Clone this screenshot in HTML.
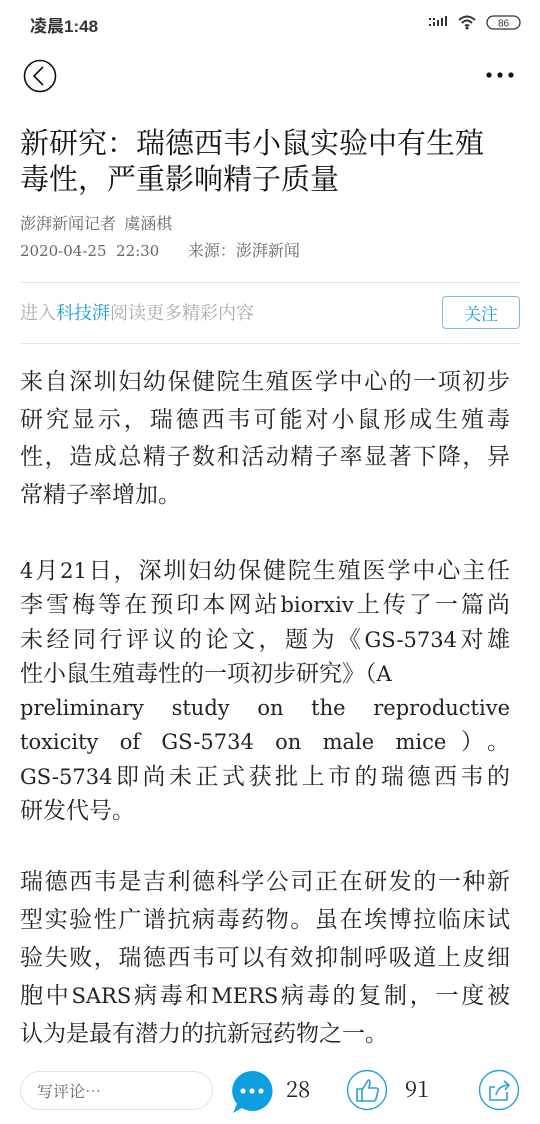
<!DOCTYPE html>
<html><head><meta charset="utf-8"><style>
*{margin:0;padding:0;box-sizing:border-box}
body{width:540px;height:1124px;background:#fff;position:relative;overflow:hidden;font-family:"Noto Serif CJK SC","Liberation Serif",serif;color:#222}
.abs{position:absolute}
.status{left:30px;top:12px;font:bold 17px "Liberation Sans","Noto Sans CJK SC",sans-serif;color:#333}
.title{left:20px;top:124px;font-size:29px;line-height:36px;color:#111;white-space:nowrap}
.meta{left:20px;font-size:16px;color:#666;white-space:nowrap;line-height:20px}
.hr{left:20px;width:500px;height:1px;background:#e8e8e8}
.body{left:20px;width:490px;font-size:23px;color:#222;font-family:"DejaVu Serif","Noto Serif CJK SC",serif}
.body div{text-align:justify;text-align-last:justify;white-space:nowrap;overflow:visible}
.body div.l{text-align-last:left}
.e{font-size:21px}
.p1 div{height:37.5px;line-height:37.5px}
.p2 div{height:34.3px;line-height:34.3px}
.p3 div{height:38px;line-height:38px}
.d{font-family:"DejaVu Serif",serif;font-size:15px}
</style></head><body>
<div class="abs status">凌晨1:48</div>
<svg class="abs" style="left:428px;top:14px" width="94" height="18" viewBox="0 0 94 18">
<g fill="#333"><rect x="1" y="10" width="2" height="2"/><rect x="5" y="8" width="2" height="4"/><rect x="9" y="6" width="2" height="6"/><rect x="13" y="4" width="2" height="8"/><rect x="17" y="2" width="2" height="10"/><rect x="1" y="4" width="2" height="2"/><rect x="5" y="4" width="2" height="2"/></g>
<path d="M31 6 Q39 -1 47 6 M34 9 Q39 4 44 9 M37 12 Q39 10 41 12" stroke="#333" stroke-width="2" fill="none"/><circle cx="39" cy="14" r="1.5" fill="#333"/>
<rect x="59" y="2" width="33" height="13" rx="6.5" fill="none" stroke="#333" stroke-width="1.3"/>
<text x="75.5" y="12.5" font-size="10" text-anchor="middle" font-family="Liberation Sans" fill="#333">86</text></svg>
<svg class="abs" style="left:23px;top:59px" width="34" height="34"><circle cx="17" cy="17" r="15.5" fill="none" stroke="#111" stroke-width="1.6"/><path d="M20 8 L11 17 L20 26" fill="none" stroke="#111" stroke-width="1.6"/></svg>
<svg class="abs" style="left:484px;top:69px" width="34" height="12"><circle cx="5" cy="6" r="2.6" fill="#111"/><circle cx="16" cy="6" r="2.6" fill="#111"/><circle cx="27" cy="6" r="2.6" fill="#111"/></svg>
<div class="abs title">新研究：瑞德西韦小鼠实验中有生殖<br>毒性，严重影响精子质量</div>
<div class="abs meta" style="top:213px">澎湃新闻记者&nbsp;&nbsp;虞涵棋</div>
<div class="abs meta" style="top:240px"><span class="d">2020-04-25&nbsp;&nbsp;22:30</span>&nbsp;&nbsp;&nbsp;&nbsp;&nbsp;&nbsp;&nbsp;来源：澎湃新闻</div>
<div class="abs hr" style="top:282px"></div>
<div class="abs" style="left:20px;top:300px;font-size:18px;line-height:24px;color:#aaa;white-space:nowrap">进入<span style="color:#1a9bd7">科技湃</span>阅读更多精彩内容</div>
<div class="abs" style="left:442px;top:296px;width:78px;height:33px;border:1px solid #7bbfdc;border-radius:4px;color:#1a9bd7;font-size:17px;text-align:center;line-height:31px">关注</div>
<div class="abs hr" style="top:343px"></div>
<div class="abs body p1" style="top:364px">
<div>来自深圳妇幼保健院生殖医学中心的一项初步</div>
<div>研究显示，瑞德西韦可能对小鼠形成生殖毒</div>
<div>性，造成总精子数和活动精子率显著下降，异</div>
<div class="l">常精子率增加。</div>
</div>
<div class="abs body p2" style="top:554px">
<div><span class="e">4</span>月<span class="e">21</span>日，深圳妇幼保健院生殖医学中心主任</div>
<div>李雪梅等在预印本网站<span class="e">biorxiv</span>上传了一篇尚</div>
<div>未经同行评议的论文，题为《<span class="e">GS-5734</span>对雄</div>
<div class="l">性小鼠生殖毒性的一项初步研究》（<span class="e">A</span></div>
<div class="e">preliminary study on the reproductive</div>
<div><span class="e">toxicity of GS-5734 on male mice</span>）。</div>
<div><span class="e">GS-5734</span>即尚未正式获批上市的瑞德西韦的</div>
<div class="l">研发代号。</div>
</div>
<div class="abs body p3" style="top:863px">
<div>瑞德西韦是吉利德科学公司正在研发的一种新</div>
<div>型实验性广谱抗病毒药物。虽在埃博拉临床试</div>
<div>验失败，瑞德西韦可以有效抑制呼吸道上皮细</div>
<div>胞中<span class="e">SARS</span>病毒和<span class="e">MERS</span>病毒的复制，一度被</div>
<div class="l">认为是最有潜力的抗新冠药物之一。</div>
</div>
<div class="abs" style="left:0;top:1058px;width:540px;height:66px;background:#fff"></div>
<div class="abs" style="left:20px;top:1071px;width:193px;height:39px;border:1px solid #e2e2e2;border-radius:20px;background:#fff;font-size:16px;color:#666;line-height:37px;padding-left:16px">写评论…</div>
<svg class="abs" style="left:228px;top:1069px" width="50" height="46"><path d="M24 2 A20 20 0 1 1 14 39 L5 44 L9 35 A20 20 0 0 1 24 2Z" fill="#0e9fe0"/><circle cx="15" cy="22" r="2.6" fill="#fff"/><circle cx="24" cy="22" r="2.6" fill="#fff"/><circle cx="33" cy="22" r="2.6" fill="#fff"/></svg>
<div class="abs" style="left:286px;top:1074px;font-size:22px;line-height:30px;color:#222">28</div>
<svg class="abs" style="left:346px;top:1069px" width="42" height="42"><circle cx="21" cy="21" r="19.5" fill="none" stroke="#2a9fd8" stroke-width="1.4"/><path d="M11 20 h5 v12 h-5z M16 21 l5 -8 q2 -4 3 0 l-1 6 h7 q3 0 2 3 l-2 8 q-1 2 -3 2 h-11" fill="none" stroke="#2a9fd8" stroke-width="1.6"/></svg>
<div class="abs" style="left:405px;top:1074px;font-size:22px;line-height:30px;color:#222">91</div>
<svg class="abs" style="left:478px;top:1069px" width="42" height="42"><circle cx="21" cy="21" r="19.5" fill="none" stroke="#2a9fd8" stroke-width="1.4"/><path d="M17 18 h-5 v13 h17 v-8 M18 26 q2 -9 12 -10 M26 12 l5 4 l-4 5" fill="none" stroke="#2a9fd8" stroke-width="1.6"/></svg>
</body></html>
